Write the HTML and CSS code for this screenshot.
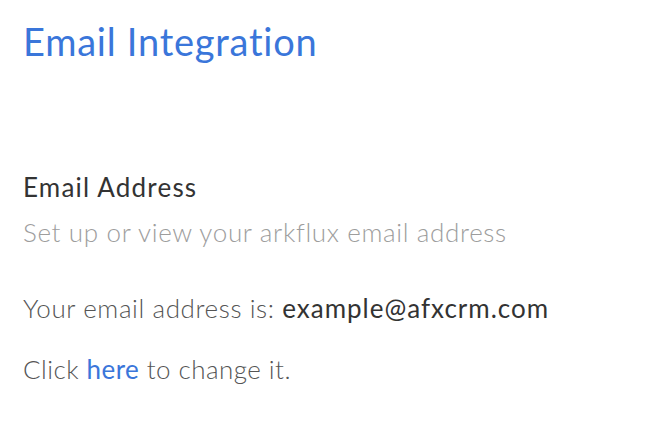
FILE: index.html
```html
<!DOCTYPE html>
<html lang="en">
<head>
  <meta charset="UTF-8" />
  <meta name="viewport" content="width=device-width, initial-scale=1.0" />
  <title>Email Integration</title>
  <link rel="stylesheet" href="styles.css">
</head>

<body>
  <main class="page">
    <h1 class="title">Email Integration</h1>

    <section class="section">
      <h2 class="section-title">Email Address</h2>
      <p class="section-desc">Set up or view your arkflux email address</p>

      <p class="line">Your email address is: <strong>example@afxcrm.com</strong></p>
      <p class="line line-last">Click <a href="#">here</a> to change it.</p>
    </section>
  </main>
</body>
</html>
```

FILE: styles.css
```css
:root {
  --blue: #3a76da;
  --dark: #333;
  --text: #555;
  --muted: #9d9d9d;
}

body {
  margin: 0;
  font-family: 'Lato', sans-serif;
  background: #fff;
  color: var(--text);
}

.page {
  padding: 18px 23px;
}

.title {
  margin: 0;
  font-size: 38px;
  font-weight: 400;
  line-height: 46px;
  letter-spacing: 0.75px;
  color: var(--blue);
}

.section {
  margin-top: 107px;
}

.section-title {
  margin: 0;
  font-size: 26px;
  font-weight: 400;
  line-height: 32px;
  letter-spacing: 1.2px;
  color: var(--dark);
}

.section-desc {
  margin: 13px 0 0;
  font-size: 26px;
  font-weight: 300;
  line-height: 32px;
  letter-spacing: 0.65px;
  color: var(--muted);
}

.line {
  margin: 44px 0 0;
  font-size: 26px;
  font-weight: 300;
  line-height: 32px;
  letter-spacing: 0.6px;
}

.line-last {
  margin-top: 29px;
  letter-spacing: 0.45px;
}

.line strong {
  font-weight: 400;
  letter-spacing: 1px;
  color: var(--dark);
}

.line a {
  color: var(--blue);
  font-weight: 400;
  text-decoration: none;
}
```
